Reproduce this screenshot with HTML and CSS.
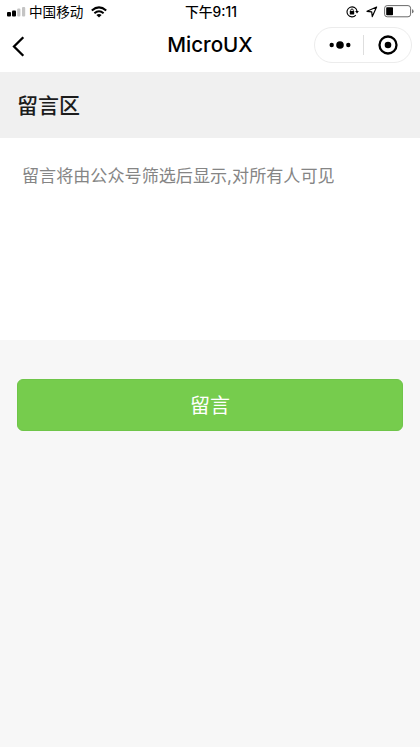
FILE: index.html
```html
<!DOCTYPE html>
<html lang="zh-CN">
<head>
<meta charset="utf-8">
<meta name="viewport" content="width=device-width, initial-scale=1">
<title>MicroUX</title>
<link rel="stylesheet" href="styles.css">
</head>
<body>
<header class="top">
  <div class="status">
    <div class="status-left">
      <svg class="signal" width="19" height="10" viewBox="0 0 19 10"><rect x="0" y="5" width="4" height="4.5" rx="1"/><rect x="5" y="3.5" width="4" height="6" rx="1"/><g fill="#c4c4c4"><rect x="10.2" y="1.5" width="3.2" height="8" rx="1"/><rect x="15" y="0" width="3.2" height="9.5" rx="1"/></g></svg>
      <span class="carrier">中国移动</span>
      <svg class="wifi" width="16" height="12" viewBox="0 0 16 12" fill="none" stroke="#000" stroke-width="2"><path d="M.8 4.6Q8-1.8 15.2 4.6M3.4 7.2Q8 3.2 12.6 7.2"/><path d="M5.4 8.9Q8 6.9 10.6 8.9L8 11.5Z" fill="#000" stroke="none"/></svg>
    </div>
    <span class="time">下午9:11</span>
    <div class="status-right">
      <svg width="13" height="12" viewBox="0 0 13 12"><path d="M11 5.2A5 5 0 1 0 9.8 9.2" fill="none" stroke="#000" stroke-width="1.1"/><path d="M9.1 4.9h3.8L11 7.4Z"/><rect x="3.8" y="5.1" width="4.4" height="3.4" rx=".4"/><path d="M4.7 5.4V4.3a1.3 1.3 0 0 1 2.6 0v1.1" fill="none" stroke="#000" stroke-width=".9"/></svg>
      <svg class="location" width="12" height="12" viewBox="0 0 12 12" fill="none" stroke="#000" stroke-width="1.2" stroke-linejoin="round"><path d="M10.6 1 1 5.3l4.7.6.6 4.7Z"/></svg>
      <svg class="battery" width="30" height="13" viewBox="0 0 30 13"><rect x=".6" y=".6" width="26" height="11.2" rx="2.6" fill="none" stroke="#444" stroke-width=".8"/><rect x="2.2" y="2.2" width="6.8" height="8" rx=".8"/><path d="M28 4.3q1.6.2 1.6 2T28 8.3Z" fill="#777"/></svg>
    </div>
  </div>
  <nav class="nav">
    <svg class="back" width="13" height="21" viewBox="0 0 13 21" fill="none" stroke="#000" stroke-width="2.3"><path d="M11.3 1.2 2 10.5 11.3 19.8"/></svg>
    <h1 class="title">MicroUX</h1>
    <div class="capsule">
      <svg class="more" width="22" height="8" viewBox="0 0 22 8"><circle cx="2.7" cy="4" r="2.2"/><circle cx="11" cy="4" r="3.8"/><circle cx="19.3" cy="4" r="2.2"/></svg>
      <span class="divider"></span>
      <svg class="close" width="20" height="20" viewBox="0 0 20 20"><circle cx="10" cy="10" r="8.5" fill="none" stroke="#000" stroke-width="2.3"/><circle cx="10" cy="10" r="3.3"/></svg>
    </div>
  </nav>
</header>
<main>
  <h2 class="section">留言区</h2>
  <div class="message">留言将由公众号筛选后显示,对所有人可见</div>
  <button class="submit">留言</button>
</main>
</body>
</html>
```
FILE: styles.css
```css
* { box-sizing: border-box; }
body {
  margin: 0;
  min-height: 747px;
  background: #f7f7f7;
  color: #000;
  font-family: Inter, "Noto Sans CJK SC", sans-serif;
}
svg { display: block; flex: none; }
.top { height: 72px; background: #fff; }
.status {
  display: grid;
  grid-template-columns: 1fr auto 1fr;
  align-items: center;
  height: 23px;
  padding: 0 6px 0 7px;
}
.status-left, .status-right { display: flex; align-items: center; }
.carrier { margin-left: 3px; padding-top: 1px; font-size: 13.6px; line-height: 22px; }
.wifi { margin-left: 8px; }
.time { padding: 1px 0 0 1px; font-size: 13.8px; font-weight: 500; line-height: 22px; }
.status-right { justify-content: flex-end; }
.location { margin-left: 7px; }
.battery { margin-left: 6px; }
.nav {
  display: grid;
  grid-template-columns: 1fr auto 1fr;
  align-items: center;
  height: 44px;
  padding: 0 8px 0 12px;
}
.back { margin-top: 2px; }
.title {
  margin: 0 4px 0 0;
  font-size: 20.6px;
  font-weight: 500;
  line-height: 44px;
}
.capsule {
  display: flex;
  align-items: center;
  justify-self: end;
  width: 98px;
  height: 36px;
  padding-left: 14px;
  border: 1px solid #ececec;
  border-radius: 18px;
}
.divider { width: 1px; height: 20px; margin: 0 14px 0 12px; background: #dedede; }
.section {
  margin: 0;
  height: 66px;
  padding-left: 17px;
  background: #f0f0f0;
  color: #1c1c1c;
  font-size: 21px;
  font-weight: 500;
  line-height: 67px;
}
.message {
  height: 202px;
  padding: 23px 22px;
  background: #fff;
  color: #858585;
  font-size: 17.1px;
  line-height: 30px;
}
.submit {
  display: block;
  width: 386px;
  height: 52px;
  margin: 39px 0 0 17px;
  padding: 2px 0 0;
  border: 1px solid #6fc549;
  border-radius: 6px;
  background: #76cc4d;
  color: #fff;
  font-family: inherit;
  font-size: 20px;
  line-height: 48px;
}
```
